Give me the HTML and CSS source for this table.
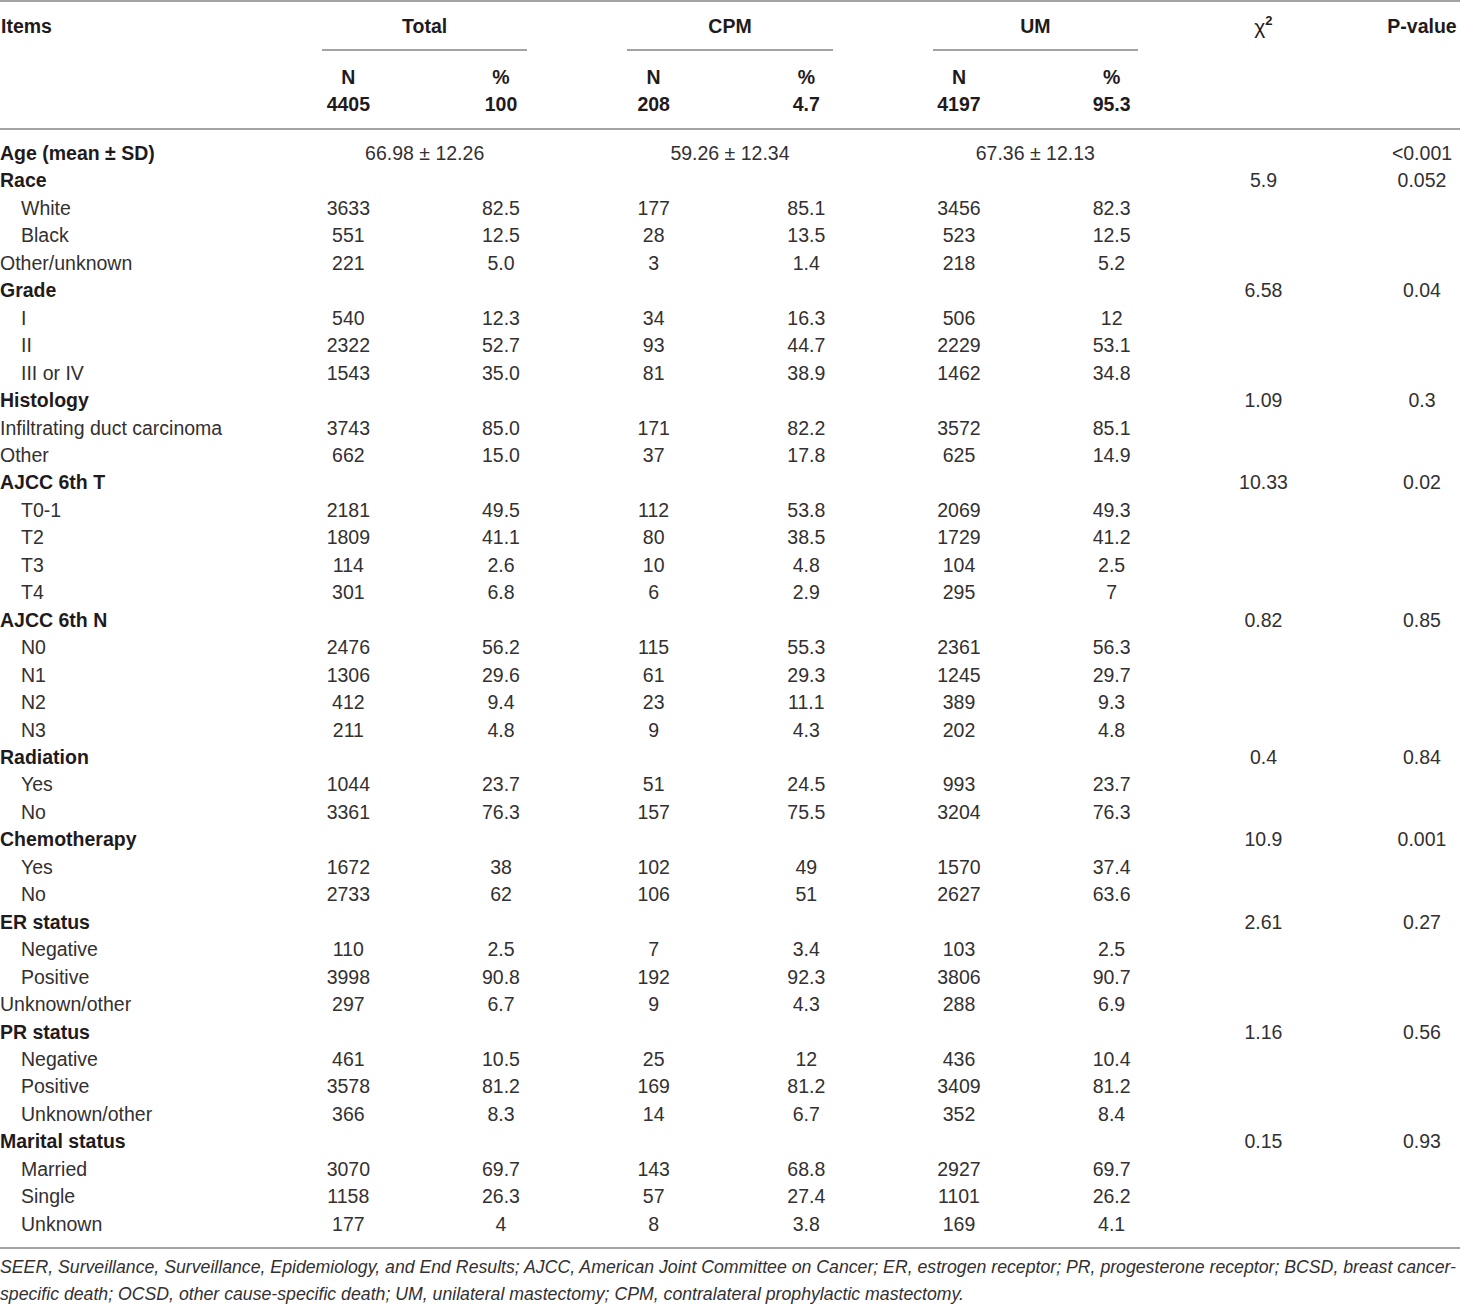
FILE: index.html
```html
<!DOCTYPE html>
<html>
<head>
<meta charset="utf-8">
<link rel="stylesheet" href="styles.css">
</head>
<body>
<table class="tbl">
<colgroup>
<col class="c-item"><col class="c-n"><col class="c-n"><col class="c-n"><col class="c-n"><col class="c-n"><col class="c-n"><col class="c-chi"><col class="c-p">
</colgroup>
<thead>
<tr class="h1">
<th rowspan="3" class="items">Items</th>
<th colspan="2"><div class="grp">Total</div></th>
<th colspan="2"><div class="grp">CPM</div></th>
<th colspan="2"><div class="grp">UM</div></th>
<th rowspan="3" class="chi">χ<sup>2</sup></th>
<th rowspan="3" class="pv">P-value</th>
</tr>
<tr class="h2">
<th>N</th><th>%</th>
<th>N</th><th>%</th>
<th>N</th><th>%</th>
</tr>
<tr class="h3">
<th>4405</th><th>100</th>
<th>208</th><th>4.7</th>
<th>4197</th><th>95.3</th>
</tr>
</thead>
<tbody>
<tr class="first"><td class="lab b">Age (mean ± SD)</td><td colspan="2">66.98 ± 12.26</td><td colspan="2">59.26 ± 12.34</td><td colspan="2">67.36 ± 12.13</td><td></td><td class="p">&lt;0.001</td></tr>
<tr><td class="lab b">Race</td><td></td><td></td><td></td><td></td><td></td><td></td><td>5.9</td><td class="p">0.052</td></tr>
<tr><td class="lab ind">White</td><td>3633</td><td>82.5</td><td>177</td><td>85.1</td><td>3456</td><td>82.3</td><td></td><td class="p"></td></tr>
<tr><td class="lab ind">Black</td><td>551</td><td>12.5</td><td>28</td><td>13.5</td><td>523</td><td>12.5</td><td></td><td class="p"></td></tr>
<tr><td class="lab">Other/unknown</td><td>221</td><td>5.0</td><td>3</td><td>1.4</td><td>218</td><td>5.2</td><td></td><td class="p"></td></tr>
<tr><td class="lab b">Grade</td><td></td><td></td><td></td><td></td><td></td><td></td><td>6.58</td><td class="p">0.04</td></tr>
<tr><td class="lab ind">I</td><td>540</td><td>12.3</td><td>34</td><td>16.3</td><td>506</td><td>12</td><td></td><td class="p"></td></tr>
<tr><td class="lab ind">II</td><td>2322</td><td>52.7</td><td>93</td><td>44.7</td><td>2229</td><td>53.1</td><td></td><td class="p"></td></tr>
<tr><td class="lab ind">III or IV</td><td>1543</td><td>35.0</td><td>81</td><td>38.9</td><td>1462</td><td>34.8</td><td></td><td class="p"></td></tr>
<tr><td class="lab b">Histology</td><td></td><td></td><td></td><td></td><td></td><td></td><td>1.09</td><td class="p">0.3</td></tr>
<tr><td class="lab">Infiltrating duct carcinoma</td><td>3743</td><td>85.0</td><td>171</td><td>82.2</td><td>3572</td><td>85.1</td><td></td><td class="p"></td></tr>
<tr><td class="lab">Other</td><td>662</td><td>15.0</td><td>37</td><td>17.8</td><td>625</td><td>14.9</td><td></td><td class="p"></td></tr>
<tr><td class="lab b">AJCC 6th T</td><td></td><td></td><td></td><td></td><td></td><td></td><td>10.33</td><td class="p">0.02</td></tr>
<tr><td class="lab ind">T0-1</td><td>2181</td><td>49.5</td><td>112</td><td>53.8</td><td>2069</td><td>49.3</td><td></td><td class="p"></td></tr>
<tr><td class="lab ind">T2</td><td>1809</td><td>41.1</td><td>80</td><td>38.5</td><td>1729</td><td>41.2</td><td></td><td class="p"></td></tr>
<tr><td class="lab ind">T3</td><td>114</td><td>2.6</td><td>10</td><td>4.8</td><td>104</td><td>2.5</td><td></td><td class="p"></td></tr>
<tr><td class="lab ind">T4</td><td>301</td><td>6.8</td><td>6</td><td>2.9</td><td>295</td><td>7</td><td></td><td class="p"></td></tr>
<tr><td class="lab b">AJCC 6th N</td><td></td><td></td><td></td><td></td><td></td><td></td><td>0.82</td><td class="p">0.85</td></tr>
<tr><td class="lab ind">N0</td><td>2476</td><td>56.2</td><td>115</td><td>55.3</td><td>2361</td><td>56.3</td><td></td><td class="p"></td></tr>
<tr><td class="lab ind">N1</td><td>1306</td><td>29.6</td><td>61</td><td>29.3</td><td>1245</td><td>29.7</td><td></td><td class="p"></td></tr>
<tr><td class="lab ind">N2</td><td>412</td><td>9.4</td><td>23</td><td>11.1</td><td>389</td><td>9.3</td><td></td><td class="p"></td></tr>
<tr><td class="lab ind">N3</td><td>211</td><td>4.8</td><td>9</td><td>4.3</td><td>202</td><td>4.8</td><td></td><td class="p"></td></tr>
<tr><td class="lab b">Radiation</td><td></td><td></td><td></td><td></td><td></td><td></td><td>0.4</td><td class="p">0.84</td></tr>
<tr><td class="lab ind">Yes</td><td>1044</td><td>23.7</td><td>51</td><td>24.5</td><td>993</td><td>23.7</td><td></td><td class="p"></td></tr>
<tr><td class="lab ind">No</td><td>3361</td><td>76.3</td><td>157</td><td>75.5</td><td>3204</td><td>76.3</td><td></td><td class="p"></td></tr>
<tr><td class="lab b">Chemotherapy</td><td></td><td></td><td></td><td></td><td></td><td></td><td>10.9</td><td class="p">0.001</td></tr>
<tr><td class="lab ind">Yes</td><td>1672</td><td>38</td><td>102</td><td>49</td><td>1570</td><td>37.4</td><td></td><td class="p"></td></tr>
<tr><td class="lab ind">No</td><td>2733</td><td>62</td><td>106</td><td>51</td><td>2627</td><td>63.6</td><td></td><td class="p"></td></tr>
<tr><td class="lab b">ER status</td><td></td><td></td><td></td><td></td><td></td><td></td><td>2.61</td><td class="p">0.27</td></tr>
<tr><td class="lab ind">Negative</td><td>110</td><td>2.5</td><td>7</td><td>3.4</td><td>103</td><td>2.5</td><td></td><td class="p"></td></tr>
<tr><td class="lab ind">Positive</td><td>3998</td><td>90.8</td><td>192</td><td>92.3</td><td>3806</td><td>90.7</td><td></td><td class="p"></td></tr>
<tr><td class="lab">Unknown/other</td><td>297</td><td>6.7</td><td>9</td><td>4.3</td><td>288</td><td>6.9</td><td></td><td class="p"></td></tr>
<tr><td class="lab b">PR status</td><td></td><td></td><td></td><td></td><td></td><td></td><td>1.16</td><td class="p">0.56</td></tr>
<tr><td class="lab ind">Negative</td><td>461</td><td>10.5</td><td>25</td><td>12</td><td>436</td><td>10.4</td><td></td><td class="p"></td></tr>
<tr><td class="lab ind">Positive</td><td>3578</td><td>81.2</td><td>169</td><td>81.2</td><td>3409</td><td>81.2</td><td></td><td class="p"></td></tr>
<tr><td class="lab ind">Unknown/other</td><td>366</td><td>8.3</td><td>14</td><td>6.7</td><td>352</td><td>8.4</td><td></td><td class="p"></td></tr>
<tr><td class="lab b">Marital status</td><td></td><td></td><td></td><td></td><td></td><td></td><td>0.15</td><td class="p">0.93</td></tr>
<tr><td class="lab ind">Married</td><td>3070</td><td>69.7</td><td>143</td><td>68.8</td><td>2927</td><td>69.7</td><td></td><td class="p"></td></tr>
<tr><td class="lab ind">Single</td><td>1158</td><td>26.3</td><td>57</td><td>27.4</td><td>1101</td><td>26.2</td><td></td><td class="p"></td></tr>
<tr class="last"><td class="lab ind">Unknown</td><td>177</td><td>4</td><td>8</td><td>3.8</td><td>169</td><td>4.1</td><td></td><td class="p"></td></tr>
</tbody>
</table>
<p class="note">SEER, Surveillance, Surveillance, Epidemiology, and End Results; AJCC, American Joint Committee on Cancer; ER, estrogen receptor; PR, progesterone receptor; BCSD, breast cancer-<br>specific death; OCSD, other cause-specific death; UM, unilateral mastectomy; CPM, contralateral prophylactic mastectomy.</p>
</body>
</html>
```

FILE: styles.css
```css
html, body {
  margin: 0;
  padding: 0;
  background: #ffffff;
}

body {
  width: 1460px;
  font-family: "Liberation Sans", Arial, sans-serif;
  color: #231f20;
}

.tbl {
  width: 1460px;
  table-layout: fixed;
  border-collapse: separate;
  border-spacing: 0;
  border-top: 2px solid #a3a3a3;
  font-size: 19.5px;
}

.c-item { width: 272px; }
.c-n { width: 152.67px; }
.c-chi { width: 151px; }
.c-p { width: 121px; }

th {
  font-weight: bold;
  text-align: center;
  padding: 0;
  line-height: 27px;
  vertical-align: top;
  color: #1f1b1c;
}

.h1 th {
  padding-top: 11px;
}

.grp {
  margin: 0 50px;
  padding-bottom: 9px;
  border-bottom: 2px solid #a3a3a3;
}

.h1 th.items {
  text-align: left;
  padding-left: 1px;
}

.h1 th.chi {
  font-weight: normal;
  font-size: 21px;
}

.chi sup {
  font-weight: bold;
  font-size: 13px;
  line-height: 0;
  vertical-align: 9px;
}

.h1 th.pv {
  padding-left: 45px;
}

.h2 th {
  padding-top: 13px;
}

.h3 th {
  padding-bottom: 10px;
}

thead tr:last-child th,
thead th[rowspan] {
  border-bottom: 2px solid #a3a3a3;
}

td {
  padding: 0;
  height: 27.46px;
  line-height: 27.46px;
  text-align: center;
  white-space: nowrap;
  vertical-align: middle;
  color: #333031;
}

td.lab {
  text-align: left;
}

td.b {
  font-weight: bold;
  color: #1f1b1c;
}

td.ind {
  padding-left: 21px;
}

td.p {
  padding-left: 45px;
}

tr.first td {
  padding-top: 10px;
}

tr.last td {
  padding-bottom: 9px;
  border-bottom: 2px solid #a3a3a3;
}

.note {
  margin: 5px 0 0 0;
  font-style: italic;
  font-size: 17.7px;
  line-height: 27px;
  color: #333031;
  white-space: nowrap;
}
```
